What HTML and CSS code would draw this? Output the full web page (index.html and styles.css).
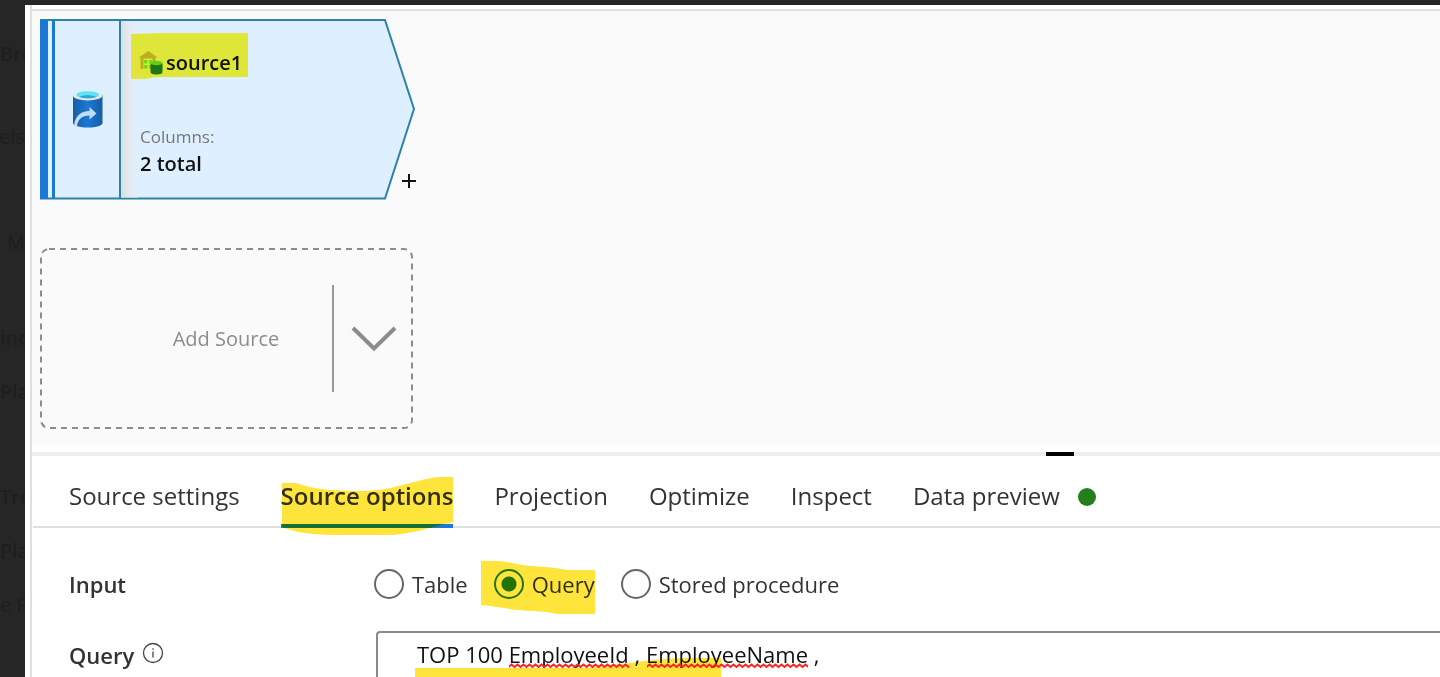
FILE: index.html
```html
<!DOCTYPE html>
<html lang="en">
<head>
  <meta charset="UTF-8" />
  <meta name="viewport" content="width=device-width, initial-scale=1.0" />
  <title>Data flow</title>
  <link rel="stylesheet" href="styles.css">
</head>
<body>

<nav class="sidebar">
  <span class="strong">Bro</span>
  <span class="gap-small align-end">nels</span>
  <span class="gap-large align-end">M</span>
  <span class="gap-medium strong">ind</span>
  <span class="strong">Pla</span>
  <span class="gap-large strong">Tro</span>
  <span class="strong">Pla</span>
  <span>e Pa</span>
</nav>

<main class="panel">
  <section class="canvas">
    <div class="source-node">
      <svg class="node-shape" viewBox="0 0 376 181" aria-hidden="true">
        <defs>
          <linearGradient id="fold">
            <stop offset="0" stop-color="#d9dee4" />
            <stop offset="0.5" stop-color="#e6ebf1" />
            <stop offset="1" stop-color="#deefff" />
          </linearGradient>
        </defs>
        <path d="M1 1H345L374 90L345 179.500H1z" fill="#deefff" stroke="#2b83a6" stroke-width="2" />
        <path d="M81 2H98V178.500H81z" fill="url(#fold)" />
        <path d="M0 1H8V180H0zM12 2H15V179H12z" fill="#1a79d4" />
        <path d="M80 1V180" stroke="#2b83a6" stroke-width="2" />
      </svg>
      <div class="node-type">
        <svg width="32" height="38" viewBox="0 0 32 38" aria-hidden="true">
          <defs>
            <linearGradient id="drum">
              <stop offset="0" stop-color="#155ea5" />
              <stop offset="0.5" stop-color="#1a79d4" />
              <stop offset="1" stop-color="#155ea5" />
            </linearGradient>
          </defs>
          <path d="M1 5V33c0 2.500 6.500 4.500 15 4.500s14.500-2 14.500-4.500V5z" fill="url(#drum)" />
          <ellipse cx="15.700" cy="5.500" rx="14.700" ry="5" fill="#e8e8e8" />
          <ellipse cx="15.700" cy="4.800" rx="11.500" ry="3.500" fill="#5fe3fb" />
          <path d="M7 7c4-2.500 13-2.500 17.500 0-4 1.800-13 1.800-17.500 0z" fill="#2fa8d5" />
          <path d="M2 35.500C3 26 9 21 17.500 21v-4l7 6.500-7 6v-4C10 25.500 6 29 5 36.500z" fill="#c4dcf5" />
        </svg>
      </div>
      <div class="node-body">
        <div class="node-name">
          <svg width="26" height="26" viewBox="0 0 26 26" aria-hidden="true">
            <path d="M0.500 7.500L10.500 1l9 6.500h-2V11h-3V8.500h-9V19h-3V7.500z" fill="#bbb68c" />
            <path d="M6 10h3.500v3.500H6zM11 10h3.500v3.500H11zM6 15h3.500v3.500H6zM11 15h2.500v3.500H11z" fill="#6be85a" />
            <path d="M12.500 13.500V22c0 1.800 3 2.500 6 2.500s6-.7 6-2.500v-8.500z" fill="#1f7a45" />
            <ellipse cx="18.500" cy="13" rx="6" ry="2.200" fill="#5fd96b" />
          </svg>
          <span>source1</span>
        </div>
        <p class="node-label">Columns:</p>
        <p class="node-total">2 total</p>
      </div>
      <svg class="marker marker-name" width="118" height="47" viewBox="0 0 118 47" aria-hidden="true">
        <path d="M0 1L30 0H117V44H30Q20 44 15 46H0z" />
      </svg>
      <button class="add-step" aria-label="Add step">
        <svg width="16" height="16" viewBox="0 0 16 16"><path d="M8 1V15M1 8H15" stroke="#111" stroke-width="2" /></svg>
      </button>
    </div>

    <div class="add-source">
      <svg class="add-outline" viewBox="0 0 374 181" aria-hidden="true">
        <rect x="1" y="1" width="371" height="179" rx="8" />
      </svg>
      <button class="add-button">Add Source</button>
      <button class="add-more" aria-label="More sources">
        <svg width="46" height="26" viewBox="0 0 46 26"><path d="M2 2L23 22.500L44 2" fill="none" stroke="#8c8c8c" stroke-width="4" /></svg>
      </button>
    </div>
  </section>

  <div class="splitter"><span class="splitter-handle"></span></div>

  <section class="settings">
    <div class="tabs" role="tablist">
      <button class="tab" role="tab">Source settings</button>
      <button class="tab active" role="tab" aria-selected="true">Source options
        <svg class="marker marker-tab" width="173" height="60" viewBox="0 0 173 60" aria-hidden="true">
          <path d="M1 7H15C32 13 50 15 80 15C112 15 128 5 157 1H172V46C158 49 128 59 108 59H55C35 59 15 57 1 51z" />
        </svg>
      </button>
      <button class="tab" role="tab">Projection</button>
      <button class="tab" role="tab">Optimize</button>
      <button class="tab" role="tab">Inspect</button>
      <button class="tab" role="tab">Data preview <span class="status-dot"></span></button>
    </div>

    <form class="options">
      <div class="row" role="radiogroup" aria-labelledby="input-title">
        <span class="row-title" id="input-title">Input</span>
        <div class="radios">
          <label><input type="radio" name="input" value="table">Table</label>
          <label class="picked"><input type="radio" name="input" value="query" checked>Query
            <svg class="marker marker-radio" width="115" height="55" viewBox="0 0 115 55" aria-hidden="true">
              <path d="M0 1H18C30 2 38 5 50 6C64 7 72 7 86 10H114V54H76C64 51 50 51 36 50C22 48 12 46 0 45z" />
            </svg>
          </label>
          <label><input type="radio" name="input" value="procedure">Stored procedure</label>
        </div>
      </div>

      <div class="row row-query">
        <label class="row-title" for="query">Query
          <svg class="info" width="22" height="22" viewBox="0 0 22 22" aria-hidden="true">
            <circle cx="11" cy="11" r="9.500" fill="none" stroke="#444" stroke-width="1.300" />
            <path d="M11 9.500V15.500M11 6.200V7.800" stroke="#444" stroke-width="1.300" />
          </svg>
        </label>
        <div class="query-box">
          <textarea id="query" spellcheck="false">TOP 100 EmployeeId , EmployeeName ,</textarea>
          <svg class="marker marker-query" width="307" height="40" viewBox="0 0 307 40" aria-hidden="true">
            <path d="M0 13H170C210 10 230 4 270 3H306V40H0z" />
          </svg>
          <svg class="squiggles" width="400" height="6" viewBox="0 0 400 6" aria-hidden="true">
            <defs>
              <pattern id="wave" width="6" height="6" patternUnits="userSpaceOnUse">
                <path d="M-1.500 1.500L1.500 4L4.500 1.500L7.500 4" fill="none" stroke="#f22" stroke-width="2" />
              </pattern>
            </defs>
            <path d="M92 0H212V6H92zM230 0H391V6H230z" fill="url(#wave)" />
          </svg>
        </div>
      </div>
    </form>
  </section>
</main>

</body>
</html>
```

FILE: styles.css
```css
* {
  box-sizing: border-box;
}

body {
  margin: 0;
  height: 100vh;
  display: flex;
  overflow: hidden;
  border-top: 5px solid #262626;
  font-family: "Open Sans", "Noto Sans", sans-serif;
  font-size: 22px;
  line-height: 32px;
  color: #333;
  background-color: white;
}

button {
  padding: 0;
  border: none;
  background: none;
  font: inherit;
  color: inherit;
  cursor: pointer;
}

p {
  margin: 0;
}

/* dimmed page behind the panel */
.sidebar {
  flex: none;
  width: 25px;
  padding-top: 22px;
  display: flex;
  flex-direction: column;
  overflow: hidden;
  background-color: #262626;
  color: #1f1f1f;
  font-size: 20px;
}

.sidebar span {
  flex: none;
  line-height: 54px;
  white-space: nowrap;
}

.sidebar .strong {
  font-weight: 600;
}

.sidebar .align-end {
  align-self: flex-end;
}

.sidebar .gap-small {
  margin-top: 29px;
}

.sidebar .gap-medium {
  margin-top: 42px;
}

.sidebar .gap-large {
  margin-top: 51px;
}

.panel {
  flex: 1;
  min-width: 0;
  margin-left: 5px;
  border-left: 2px solid #dedede;
}

.canvas {
  margin-top: 4px;
  padding: 8px 8px 16px;
  border-top: 2px solid #e0e0e0;
  background-color: #fafafa;
}

.source-node {
  position: relative;
  width: 376px;
  height: 181px;
  display: flex;
  color: #111;
}

.node-shape,
.add-outline {
  position: absolute;
  inset: 0;
}

.node-type {
  position: relative;
  width: 80px;
  padding: 0 0 2px 15px;
  display: flex;
  align-items: center;
  justify-content: center;
}

.node-body {
  position: relative;
  padding: 28px 0 0 18px;
  font-weight: 600;
  font-size: 20px;
}

.node-name {
  display: flex;
  align-items: center;
  gap: 2px;
  margin-bottom: 45px;
}

.node-label,
.node-total {
  padding-left: 2px;
}

.node-label {
  font-size: 17px;
  line-height: 26px;
  font-weight: 400;
  color: #777;
}

.node-total {
  line-height: 28px;
}

/* highlighter strokes */
.marker {
  position: absolute;
  fill: #ffe53b;
  mix-blend-mode: multiply;
  pointer-events: none;
}

.marker-name {
  left: 91px;
  top: 14px;
  fill: #fff63a;
}

.add-step {
  position: absolute;
  right: -1px;
  bottom: 11px;
  height: 16px;
  line-height: 0;
}

.add-source {
  position: relative;
  width: 374px;
  height: 181px;
  margin-top: 48px;
  padding: 37px 0;
  display: flex;
  color: #8c8c8c;
}

.add-outline rect {
  fill: none;
  stroke: #8c8c8c;
  stroke-width: 2;
  stroke-dasharray: 6 5;
}

.add-button {
  position: relative;
  width: 294px;
  padding-left: 80px;
  border-right: 2px solid #999;
  font-size: 20px;
}

.add-more {
  position: relative;
  flex: 1;
  line-height: 0;
}

.splitter {
  height: 11px;
  border-bottom: 4px solid #eee;
}

.splitter-handle {
  display: block;
  position: relative;
  top: 7px;
  width: 28px;
  height: 4px;
  margin-left: 72%;
  background-color: black;
}

.tabs {
  display: flex;
  gap: 41px;
  margin-left: 1px;
  padding-left: 36px;
  border-bottom: 2px solid #e0e0e0;
  font-size: 24px;
}

.tab {
  position: relative;
  height: 72px;
  margin-bottom: -2px;
  padding-top: 12px;
  border-bottom: 4px solid transparent;
  white-space: nowrap;
}

.tab.active {
  font-weight: 600;
  border-bottom-color: #1a79d4;
}

.marker-tab {
  left: 0;
  top: 20px;
}

.status-dot {
  display: inline-block;
  width: 18px;
  height: 18px;
  margin-left: 12px;
  border-radius: 50%;
  vertical-align: -1px;
  background-color: #237f1b;
}

.options {
  padding: 40px 0 0 37px;
}

.row {
  display: flex;
}

.row-title {
  flex: none;
  width: 305px;
  font-weight: 600;
}

.radios {
  display: flex;
  gap: 26px;
}

.radios label {
  position: relative;
  display: flex;
  align-items: center;
  gap: 8px;
}

.radios input {
  appearance: none;
  width: 30px;
  height: 30px;
  margin: 0;
  border: 2px solid #666;
  border-radius: 50%;
}

.radios input:checked {
  border-color: #1a79d4;
  background: radial-gradient(circle, #1a79d4 7px, transparent 8px);
}

.radios .picked input:checked {
  border-color: #237f1b;
  background: radial-gradient(circle, #237f1b 7px, transparent 8px);
}

.marker-radio {
  left: -13px;
  top: -8px;
}

.row-query {
  margin-top: 31px;
}

.row-query .row-title {
  padding-top: 8px;
}

.info {
  margin-left: 2px;
}

.query-box {
  position: relative;
  flex: 1;
  margin-left: 2px;
  margin-right: -8px;
}

.query-box textarea {
  display: block;
  width: 100%;
  height: 120px;
  padding: 5px 39px;
  border: 2px solid #8a8a8a;
  border-radius: 4px;
  outline: none;
  resize: none;
  background: white;
  font: inherit;
  color: #111;
}

.marker-query {
  left: 39px;
  top: 24px;
}

.squiggles {
  position: absolute;
  left: 41px;
  top: 32px;
}
```
